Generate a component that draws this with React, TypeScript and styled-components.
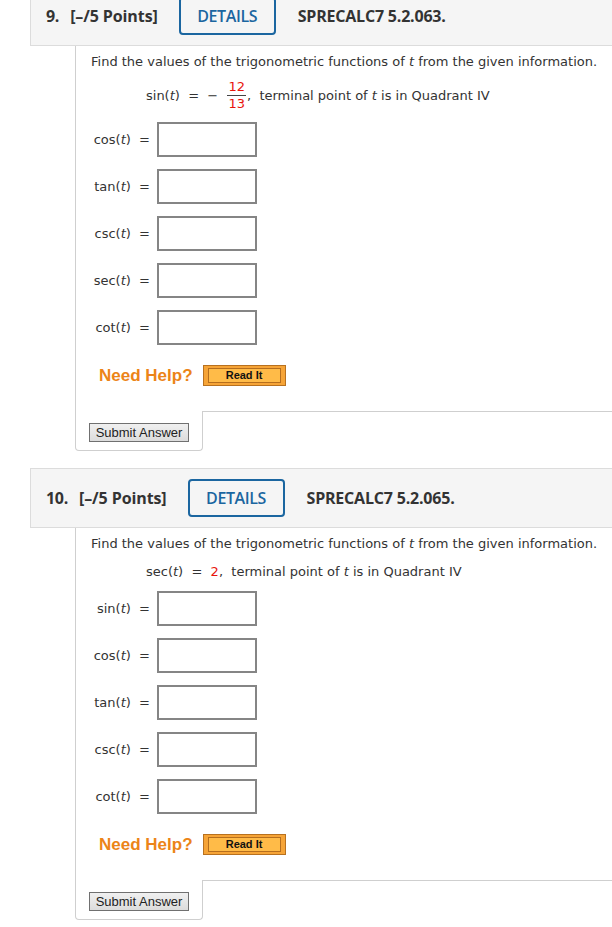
import React from 'react';
import styled, { createGlobalStyle } from 'styled-components';

const Global = createGlobalStyle`
  html, body {
    margin: 0;
    padding: 0;
    background: #fff;
  }
  body {
    font-family: 'DejaVu Sans', Verdana, sans-serif;
    color: #333;
    overflow: hidden;
  }
`

const Page = styled.div`
  margin-top: -14px;
  width: 612px;
`

const Question = styled.section`
  & + & {
    margin-top: 17px;
  }
`

const Header = styled.div`
  margin-left: 30px;
  background: #f5f5f5;
  border: 1px solid #dcdcdc;
  border-right: none;
  padding: 10px 0 10px 15px;
  display: flex;
  align-items: center;
  font-family: 'Open Sans', sans-serif;
  font-size: 16px;
  color: #333;
`

const Number = styled.span`
  font-weight: 700;
  letter-spacing: -0.3px;
  margin-right: 11px;
`

const Points = styled.span`
  font-weight: 700;
  letter-spacing: -0.1px;
`

const Details = styled.button`
  margin-left: 21px;
  width: 97px;
  height: 38px;
  box-sizing: border-box;
  border: 2px solid #1b66a0;
  border-radius: 4px;
  background: transparent;
  color: #1b66a0;
  font-family: 'Open Sans', sans-serif;
  font-weight: 600;
  letter-spacing: -0.4px;
  font-size: 16px;
  padding: 0;
`

const Code = styled.span`
  margin-left: 22px;
  font-weight: 700;
  letter-spacing: -0.2px;
`

const Main = styled.div`
  margin-left: 75px;
  border-left: 1px solid #cfcfcf;
  padding: 7px 0 25px 15px;
  font-size: 13px;
  color: #333;
`

const Prompt = styled.div`
  line-height: 18px;
  margin-bottom: 9px;
  white-space: nowrap;
`

const Given = styled.div`
  display: flex;
  align-items: center;
  min-height: 18px;
  padding-left: 55px;
  white-space: pre;
`

const Red = styled.span`
  color: #e8140c;
`

const Frac = styled.span`
  display: inline-flex;
  flex-direction: column;
  align-items: center;
  color: #e8140c;
  line-height: 14px;
  margin: 0 1px;

  span:first-child {
    border-bottom: 1px solid #444;
    padding: 0 1px 1px;
  }
  span:last-child {
    padding-top: 1px;
  }
`

const Rows = styled.div`
  margin-top: 11px;
  display: flex;
  flex-direction: column;
  gap: 12px;
`

const Row = styled.div`
  display: flex;
  align-items: center;
  height: 35px;
`

const Label = styled.label`
  width: 59px;
  text-align: right;
  padding-right: 7px;
  white-space: pre;
`

const Answer = styled.input`
  width: 100px;
  height: 35px;
  box-sizing: border-box;
  border: 2px solid #858585;
  background: #fff;
  margin: 0;
`

const Help = styled.div`
  margin-top: 20px;
  display: flex;
  align-items: center;
  padding-left: 8px;
`

const HelpText = styled.span`
  font-family: 'Liberation Sans', Arial, sans-serif;
  font-weight: 700;
  font-size: 17px;
  color: #ec8418;
  margin-right: 10px;
`

const ReadIt = styled.button`
  width: 83px;
  height: 21px;
  box-sizing: border-box;
  border: 1px solid #b8711f;
  background: #f6a437;
  padding: 2px 4px;
  display: flex;

  span {
    flex: 1;
    border: 1px solid #b66e1d;
    background: #ffbb48;
    font-family: 'Liberation Sans', Arial, sans-serif;
    font-weight: 700;
    font-size: 11px;
    line-height: 13px;
    color: #111;
  }
`

const Footer = styled.div`
  margin-left: 75px;
  display: flex;
`

const SubmitCell = styled.div`
  border: 1px solid #cfcfcf;
  border-top: none;
  border-radius: 0 0 4px 4px;
  padding: 12px 13px 8px 13px;
`

const Rest = styled.div`
  flex: 1;
  border-top: 1px solid #cfcfcf;
`

const Submit = styled.button`
  display: block;
  width: 100px;
  height: 19px;
  box-sizing: border-box;
  border: 1px solid #707070;
  background: linear-gradient(#f0f0f0, #dcdcdc);
  font-family: 'Liberation Sans', Arial, sans-serif;
  font-size: 13px;
  color: #222;
  padding: 0;
  line-height: 17px;
`

type Item = { fn: string }

const T = () => <i>t</i>

function QuestionBlock({ num, code, given, items }: { num: string; code: string; given: React.ReactNode; items: Item[] }) {
  return (
    <Question>
      <Header>
        <Number>{num}.</Number>
        <Points>[–/5 Points]</Points>
        <Details>DETAILS</Details>
        <Code>{code}</Code>
      </Header>
      <Main>
        <Prompt>Find the values of the trigonometric functions of <T /> from the given information.</Prompt>
        <Given>{given}</Given>
        <Rows>
          {items.map(it => (
            <Row key={it.fn}>
              <Label>{it.fn}(<T />)  =</Label>
              <Answer type="text" />
            </Row>
          ))}
        </Rows>
        <Help>
          <HelpText>Need Help?</HelpText>
          <ReadIt><span>Read It</span></ReadIt>
        </Help>
      </Main>
      <Footer>
        <SubmitCell>
          <Submit>Submit Answer</Submit>
        </SubmitCell>
        <Rest />
      </Footer>
    </Question>
  )
}

export default function App() {
  return (
    <>
      <Global />
      <Page>
        <QuestionBlock
          num="9"
          code="SPRECALC7 5.2.063."
          given={<>sin(<T />)  =  −  <Frac><span>12</span><span>13</span></Frac>,  terminal point of <T /> is in Quadrant IV</>}
          items={[{ fn: 'cos' }, { fn: 'tan' }, { fn: 'csc' }, { fn: 'sec' }, { fn: 'cot' }]}
        />
        <QuestionBlock
          num="10"
          code="SPRECALC7 5.2.065."
          given={<>sec(<T />)  =  <Red>2</Red>,  terminal point of <T /> is in Quadrant IV</>}
          items={[{ fn: 'sin' }, { fn: 'cos' }, { fn: 'tan' }, { fn: 'csc' }, { fn: 'cot' }]}
        />
      </Page>
    </>
  )
}
